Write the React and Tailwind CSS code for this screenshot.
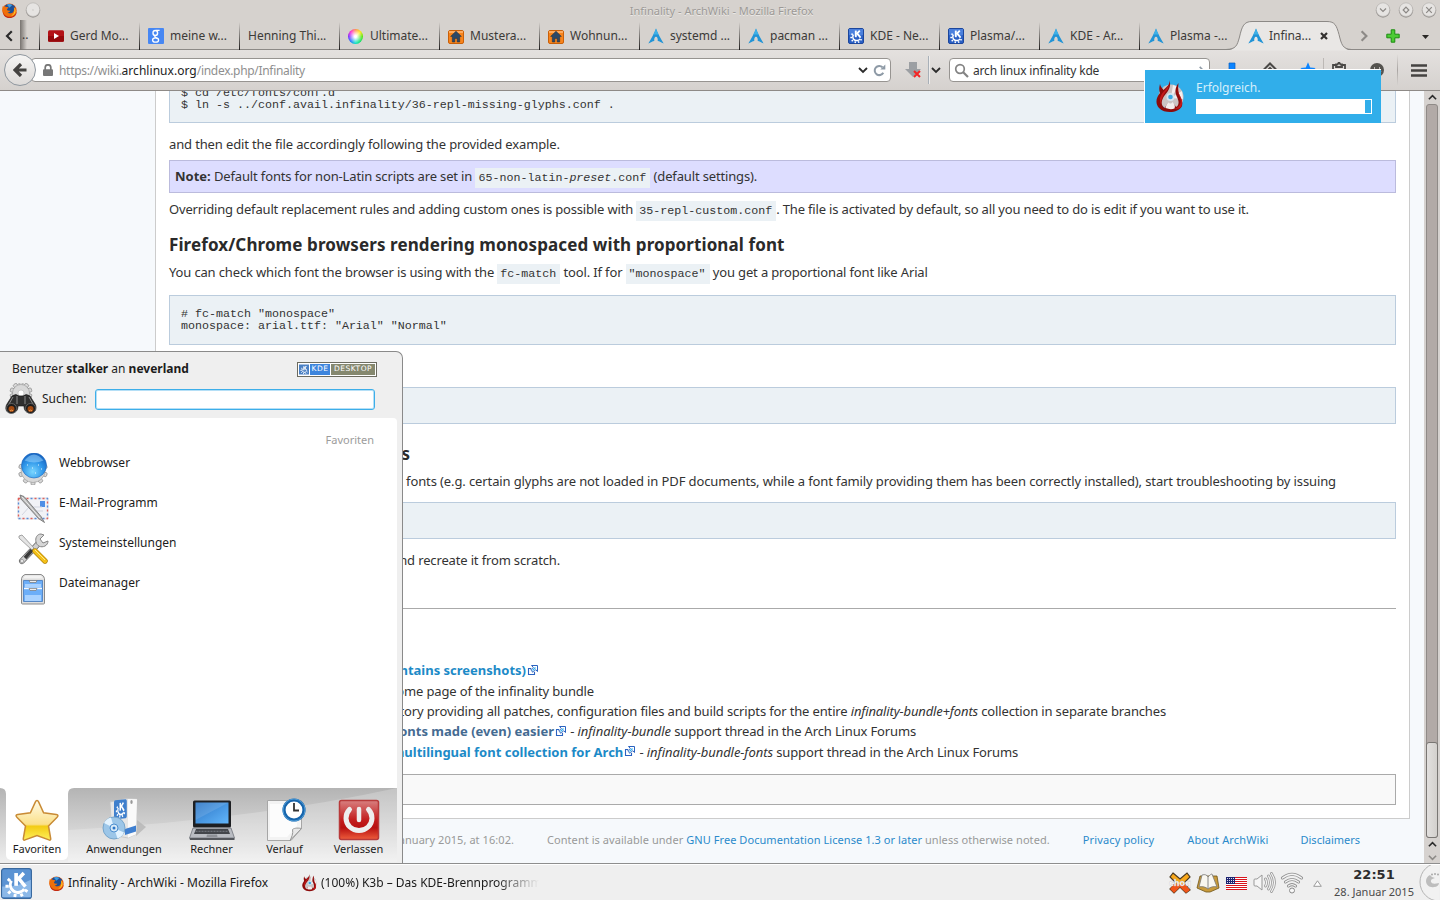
import React from 'react';
import clsx from 'clsx';

const TABS = [
    { title: 'Gerd Mo...', icon: 'youtube' },
    { title: 'meine w...', icon: 'google' },
    { title: 'Henning Thi...' },
    { title: 'Ultimate...', icon: 'wheel' },
    { title: 'Mustera...', icon: 'house' },
    { title: 'Wohnun...', icon: 'house' },
    { title: 'systemd ...', icon: 'arch' },
    { title: 'pacman ...', icon: 'arch' },
    { title: 'KDE - Ne...', icon: 'kde' },
    { title: 'Plasma/...', icon: 'kde' },
    { title: 'KDE - Ar...', icon: 'arch' },
    { title: 'Plasma -...', icon: 'arch' },
];

const FAVORITES = [
    { label: 'Webbrowser', Icon: GlobeIcon },
    { label: 'E-Mail-Programm', Icon: MailIcon },
    { label: 'Systemeinstellungen', Icon: ToolsIcon },
    { label: 'Dateimanager', Icon: CabinetIcon },
];

const GEAR = Array.from({ length: 10 }, (_, i) => i * 36);

function Gear({ cx, cy, r, fill = '#d8d8d8', stroke = '#8a8a8a' }) {
    return (
        <g>
            {GEAR.map(a => (
                <rect key={a} x={cx - 2} y={cy - r - 2.5} width="4" height="5" rx="1" fill={fill} stroke={stroke} strokeWidth=".7" transform={`rotate(${a} ${cx} ${cy})`} />
            ))}
            <circle cx={cx} cy={cy} r={r} fill={fill} stroke={stroke} strokeWidth=".5" />
        </g>
    );
}

/* K letter in front of a half gear, shared by the tab icon, the start button and the box */
function KMark() {
    return (
        <g stroke="#fff" fill="none">
            <path d="M7.8 2.6v6.6" strokeWidth="1.9" />
            <path d="M8.4 6.2l3.400-3.600M9.300 5.600l3.300 4" strokeWidth="1.800" />
            <path d="M5.400 6.600a3.800 3.800 0 1 0 6.600 4.200" strokeWidth="1.500" />
            <path d="M4.700 6.700L3.500 5.600M4 9.400H2.300M4.900 12l-1.200 1.200M7.400 13.400l-.3 1.600M10.300 13.200l.7 1.500M12.300 11.300l1.400.8" strokeWidth="1.500" />
        </g>
    );
}

function TabIcon({ name }) {
    if (name === 'youtube') {
        return (
            <svg width="16" height="16" viewBox="0 0 16 16">
                <rect y="2.3" width="16" height="11.4" rx="1.5" fill="#b31217" />
                <path d="M0 8h16v4.200q0 1.500-1.500 1.500h-13Q0 13.700 0 12.200z" fill="#96090c" />
                <path d="M6 5l5 3-5 3z" fill="#fff" />
            </svg>
        );
    }
    if (name === 'google') {
        return (
            <svg width="16" height="16" viewBox="0 0 16 16">
                <rect width="16" height="16" rx="1" fill="#4787f3" />
                <ellipse cx="7.300" cy="5" rx="2.300" ry="2.500" fill="none" stroke="#fff" strokeWidth="1.400" />
                <ellipse cx="7.600" cy="12" rx="3" ry="2.200" fill="none" stroke="#fff" strokeWidth="1.300" />
                <path d="M8 2.300h3.600M7.500 7.500c-1.300 1-.6 1.700.5 2.300l1.500.8" fill="none" stroke="#fff" strokeWidth="1.300" />
            </svg>
        );
    }
    if (name === 'wheel') {
        return <span className="block size-[15px] rounded-full bg-[radial-gradient(circle,white_10%,transparent_70%),conic-gradient(#ff8a4a,#ffe600,#4de600,#00e060,#00e0c0,#1070ff,#7a20ff,#ff20d0,#ff8a4a)]" />;
    }
    if (name === 'house') {
        return (
            <svg width="16" height="16" viewBox="0 0 16 16">
                <rect x=".5" y="2.5" width="15" height="13" rx="1.5" fill="#f8841b" stroke="#c95f08" />
                <path d="M1 3h14v2H1z" fill="#ffab5e" />
                <path d="M8 3.2L2.6 8.4h1.7V14h2.5v-3.6h2.4V14h2.5V8.4h1.7z" fill="#2c4866" stroke="#1b2f45" strokeWidth=".5" />
            </svg>
        );
    }
    if (name === 'kde') {
        return (
            <svg width="16" height="16" viewBox="0 0 16 16">
                <rect x=".5" y=".5" width="15" height="15" rx="1.5" fill="#2a5fc4" stroke="#1c469c" />
                <path d="M1 1h14v6Q8 9 1 7z" fill="#4b80dd" />
                <KMark />
            </svg>
        );
    }
    return (
        <svg width="16" height="16" viewBox="0 0 16 16">
            <path d="M8 .4C6.6 4.2 3.6 10 .3 15.6c2.400-1.500 4.200-2.400 6-2.700-.4-2.500.5-4.200 1.700-4.200s2.100 1.700 1.700 4.200c1.800.3 3.600 1.200 6 2.700C12.400 10 9.400 4.200 8 .4z" fill="#2294d6" />
            <path d="M8 .4C7.300 2.600 6.300 4.600 5.100 7c1.600-.6 4-.6 5.700 0C9.600 4.600 8.700 2.600 8 .4z" fill="#3fb0e6" />
        </svg>
    );
}

function FirefoxIcon() {
    return (
        <svg width="15" height="15" viewBox="0 0 16 16">
            <circle cx="8" cy="8" r="7.6" fill="#e8590c" />
            <path d="M3 3a7.600 7.600 0 0 1 11 1l-2 6-5 2-4-4z" fill="#1c4f96" />
            <path d="M5 1.500a7 7 0 0 1 6 .5L8 5z" fill="#3d9be0" />
            <path d="M.8 3.200C1.600 4.200 2.800 3.500 4.200 4c1 .2 1.600.5 2.800.5-.6 1.300-1.800 1.300-1.600 2.800C6 8.800 9 8 9 8c-.5 2-3 2.200-3 2.200s3 2.800 6.200-.7c1-1.500.7-3.500.3-5 2.200 1.500 3.200 4.500 2.700 6.500-1.600 4-5.200 4.800-8.200 4.300C1.500 14.500-.7 9 .8 3.200z" fill="#f0700a" />
            <path d="M13 4.500c1.800 2 2 5 .4 7-1.500 1.700-3 2.200-4.400 2.500 4-2 5-5 4-9.500z" fill="#ffcb2e" />
            <path d="M1 9c1 4 5 6.500 9 5.600 3-.6 5-3 5.500-5.600.5 4-3 7-7.500 7S1 13 1 9z" fill="#c32b12" />
        </svg>
    );
}

function K3bIcon({ size = 15 }) {
    return (
        <svg width={size} height={(size * 32) / 28} viewBox="0 0 28 32">
            <circle cx="15" cy="17" r="12.5" fill="#cbc3c3" />
            <path d="M15 18L26 11l1 8zM15 18L17 5l5 2z" fill="#f4eeee" />
            <path d="M13.500 0c.5 5-3 7-6 10-1-2-3-3-3.500-6-1 4-1 6 0 9-4 5-5 10-1 15 3 3 7 4 11 4 5 0 10-2 12-6 1-4-1-8-3-12-1-3-1-7-.5-11-3 4-4 8-2 13 2 4 3 7 1 10l-1.500 1c-1-2-2-3-3.500-4-1 2-3 2-4 0-2 2-3 3-3.500 5C5 26 5 22 7 18c3-5 9-9 6.500-18z" fill="#8d0b0b" />
            <path d="M12.500 5c-1 4-7 7-8.500 13 0 3 0 4 1 6 0-5 2-8 4.500-12 2-2 3.500-4 3-7zM21.500 9c0 5 4 8 3 14-1 3-3 5-6 6 7 1 9-5 7-10-1-3-3-5-4-10z" fill="#c41a1a" />
            <circle cx="14.500" cy="17" r="4" fill="#d4e5f0" />
            <circle cx="14.500" cy="17" r="2.300" fill="#38a8e0" />
            <path d="M9.500 28c.5-3 1.500-4 3-5.500 1 1.500 3 1.500 4-.5 2 2 3 4 2 6.500q-4 1.500-9-.5z" fill="#f2eded" />
        </svg>
    );
}

function GlobeIcon() {
    return (
        <svg width="32" height="32" viewBox="0 0 32 32">
            <Gear cx={16} cy={17.5} r={12} />
            <defs>
                <radialGradient id="globe" cx=".45" cy=".75" r=".75">
                    <stop offset="0" stopColor="#7ad6ff" />
                    <stop offset=".55" stopColor="#2f97ea" />
                    <stop offset="1" stopColor="#1560bd" />
                </radialGradient>
            </defs>
            <circle cx="17" cy="12.5" r="12.5" fill="url(#globe)" stroke="#1d66bd" strokeWidth=".6" />
            <path d="M7.500 7.500q9.500-12 19 0-9 4-19 0z" fill="#a4d9ff" opacity=".5" />
            <path d="M10 12h1M15 15h1M21 12h1M18 20h1M24 16h1" stroke="#e6f7ff" strokeWidth="1.2" />
        </svg>
    );
}

function MailIcon() {
    return (
        <svg width="32" height="32" viewBox="0 0 32 32">
            <path d="M1 5h30v21H1z" fill="#f1f2f6" stroke="#dcdde4" />
            <path d="M1.500 5.500h29v20h-29z" fill="none" stroke="#e0605a" strokeWidth="1.400" strokeDasharray="2 6" />
            <path d="M1.500 5.500h29v20h-29z" fill="none" stroke="#5a8bd6" strokeWidth="1.400" strokeDasharray="2 6" strokeDashoffset="4" />
            <rect x="23" y="8" width="5" height="6" fill="#4f8fe6" />
            <path d="M16 14h9M18 18h8M5 22l8-9" stroke="#d2d5df" />
            <path d="M3 2l4 1.500 17 20 3.500 6-6-4L4 6z" fill="#b4b4b4" stroke="#6d6d6d" strokeWidth=".8" />
            <path d="M5 4l18 21" stroke="#efefef" strokeWidth="1" />
        </svg>
    );
}

function ToolsIcon() {
    return (
        <svg width="32" height="32" viewBox="0 0 32 32">
            <path d="M5 28L21 11" stroke="#666" strokeWidth="6" strokeLinecap="round" />
            <path d="M5 28L21 11" stroke="#cfcfcf" strokeWidth="4.5" strokeLinecap="round" />
            <path d="M8 25l8-9" stroke="#3a3a3a" strokeWidth="3.5" />
            <path d="M24 1c-4 0-6 4-5 8s5 6 9 4c2-1 3-3 3-5l-5 2-3-4 4-4z" fill="#d6d6d6" stroke="#858585" />
            <circle cx="5" cy="28" r="1.5" fill="#fff" stroke="#777" strokeWidth=".6" />
            <path d="M2 3l3-1 12 13-2 2L2 5z" fill="#e4e4e4" stroke="#8f8f8f" strokeWidth=".8" />
            <path d="M18 18l10 10" stroke="#a87900" strokeWidth="5.400" strokeLinecap="round" />
            <path d="M18 18l10 10" stroke="#f4c018" strokeWidth="4.200" strokeLinecap="round" />
            <path d="M18 17l10 10" stroke="#ffe98a" strokeWidth="1" />
        </svg>
    );
}

function CabinetIcon() {
    return (
        <svg width="32" height="32" viewBox="0 0 32 32">
            <path d="M8 1.500h16q3 1 3.500 4V30q0 1-1 1h-21q-1 0-1-1V5.500q.5-3 3.500-4z" fill="#dedede" stroke="#8b8b8b" />
            <path d="M8 2.500h16l2 3H6z" fill="#f2f2f2" />
            <path d="M6.500 7.500h19v8h-19zM6.500 15.500h19v13h-19z" fill="#6caef8" stroke="#4279bd" strokeWidth=".8" />
            <path d="M8 11h16v3.500H8zM8 22h16v6H8z" fill="#a9d2ff" />
            <path d="M7 15.500h18" stroke="#f4f8ff" strokeWidth="1.400" />
            <path d="M12 7.500h8l-1 2h-6zM12 15.500h8l-1 2h-6z" fill="#eee" stroke="#777" strokeWidth=".7" />
        </svg>
    );
}

function BinocularsIcon() {
    return (
        <svg width="32" height="32" viewBox="0 0 32 32">
            <Gear cx={16} cy={10} r={8.5} />
            <circle cx="16" cy="10" r="3" fill="#fff" stroke="#aaa" strokeWidth=".5" />
            <path d="M7 13q4-3 7 0h4q3-3 7 0l5 8c3 5-1 10-5 9-4 0-6-3-6-7h-6c0 4-2 7-6 7C2 31-1 26 2 21z" fill="#2f2f2f" stroke="#111" strokeWidth=".6" />
            <path d="M8 14l-4 7M24 14l4 7M12 13v8M20 13v8" stroke="#8c8c8c" strokeWidth="1" />
            <circle cx="6.5" cy="25.5" r="5" fill="#1c1c1c" stroke="#777" strokeWidth=".7" />
            <circle cx="25.500" cy="25.500" r="5" fill="#1c1c1c" stroke="#777" strokeWidth=".7" />
            <circle cx="6.5" cy="26" r="3" fill="#a14a12" />
            <circle cx="25.5" cy="26" r="3" fill="#a14a12" />
            <path d="M5 28q2-2 3 0M24 28q2-2 3 0" stroke="#f09a4c" fill="none" />
        </svg>
    );
}

function StarIcon() {
    return (
        <svg width="46" height="44" viewBox="0 0 46 44">
            <defs>
                <linearGradient id="star" x2="0" y2="1">
                    <stop offset="0" stopColor="#fffbe8" />
                    <stop offset=".6" stopColor="#fbe08a" />
                    <stop offset=".65" stopColor="#f3cc14" />
                    <stop offset="1" stopColor="#fff05c" />
                </linearGradient>
            </defs>
            <path d="M23 2.500c1 0 1.300.7 1.700 1.600l4.900 10.600 12.700 1.700c2 .3 2 1.700.8 2.800l-8.600 8.700 2.200 12.600c.2 1.500-.5 2-1.800 1.400L23 37.600l-11.900 4.300c-1.300.6-2 .1-1.800-1.400l2.200-12.600-8.600-8.700c-1.200-1.100-1.200-2.500.8-2.800l12.700-1.700 4.900-10.600c.4-.9.7-1.600 1.700-1.600z" fill="url(#star)" stroke="#c98b35" strokeWidth="1.5" />
        </svg>
    );
}

function BoxIcon() {
    return (
        <svg width="46" height="44" viewBox="0 0 46 44">
            <path d="M35 38l10-9-9-7z" fill="#b5b5b5" opacity=".8" />
            <path d="M9 4L25 .5 36 1l-1 35-8 4-16-3z" fill="#e6e6e6" stroke="#c4c4c4" strokeWidth=".8" />
            <path d="M27 1l9 .3-1 35-8 3.500z" fill="#fafafa" />
            <path d="M24 31l11-3.500v6L24 37z" fill="#3f7fd0" />
            <ellipse cx="30.500" cy="4" rx="1.200" ry="2" fill="#999" />
            <g transform="translate(13 2.5) skewY(-6) scale(.8 1.180)">
                <rect width="16" height="16" rx="1.5" fill="#3f7fcc" />
                <KMark />
            </g>
            <circle cx="13" cy="30" r="11" fill="#9cc6e8" stroke="#76a5cb" />
            <path d="M13 30L3 25a11 11 0 0 1 7-5.500zM13 30l10 4.500a11 11 0 0 1-6.500 6z" fill="#e3f3ff" />
            <circle cx="13" cy="30" r="4" fill="#d7e9f7" stroke="#4d8fd0" />
            <circle cx="13" cy="30" r="1.500" fill="#2d78c8" />
        </svg>
    );
}

function LaptopIcon() {
    return (
        <svg width="46" height="44" viewBox="0 0 46 44">
            <defs>
                <linearGradient id="lcd" x2="1" y2="1">
                    <stop offset="0" stopColor="#2b74c4" />
                    <stop offset="1" stopColor="#62b6fb" />
                </linearGradient>
            </defs>
            <rect x="4" y="2.5" width="38" height="27" rx="1.5" fill="#1d1f22" />
            <rect x="6.5" y="4.5" width="33" height="21" fill="url(#lcd)" />
            <path d="M6.500 4.500h33L6.500 22z" fill="#fff" opacity=".12" />
            <path d="M4 30h38l3.500 10H.5z" fill="#b9bcc2" stroke="#70747b" strokeWidth=".8" />
            <path d="M7 31h32l2 5H5z" fill="#43464b" />
            <path d="M6.500 33.300h33" stroke="#777b82" strokeDasharray="2 1" />
            <path d="M18 36.500h10l.5 2.500h-11z" fill="#8e9197" />
            <path d="M.5 40h45v2H1z" fill="#54575c" />
        </svg>
    );
}

function HistoryIcon() {
    return (
        <svg width="46" height="44" viewBox="0 0 46 44">
            <path d="M5.500 2.500h34v28L29 42.500H5.500z" fill="#f3f3f3" stroke="#a6a6a6" />
            <path d="M8 6h27v22L25 39H8z" fill="#fcfcfc" />
            <path d="M39.500 30.500c-5-1-8 0-9 1 1 4-1 8-2.500 11z" fill="#e8e8e8" stroke="#999" />
            <circle cx="32" cy="12" r="10" fill="#fff" stroke="#1765ac" strokeWidth="3.200" />
            <circle cx="32" cy="12" r="11" fill="none" stroke="#5ba7e0" strokeWidth=".8" />
            <path d="M32 5v7.500h5" stroke="#333" strokeWidth="1.800" fill="none" />
        </svg>
    );
}

function PowerIcon() {
    return (
        <svg width="46" height="44" viewBox="0 0 46 44">
            <defs>
                <linearGradient id="pow" x2="0" y2="1">
                    <stop offset="0" stopColor="#d88080" />
                    <stop offset=".5" stopColor="#c31d1d" />
                    <stop offset=".7" stopColor="#b81010" />
                    <stop offset="1" stopColor="#ee5d3c" />
                </linearGradient>
            </defs>
            <rect x="3.500" y="2.500" width="39" height="39" rx="2" fill="url(#pow)" stroke="#b83a3a" strokeWidth="1.500" />
            <path d="M13.500 11.500a13 12.500 0 1 0 19 0" fill="none" stroke="#eee" strokeWidth="5" strokeLinecap="round" />
            <path d="M23 11v11" stroke="#eee" strokeWidth="4.500" strokeLinecap="round" />
        </svg>
    );
}

const LAUNCHER_TABS = [
    { label: 'Anwendungen', Icon: BoxIcon, cls: 'w-[112px]' },
    { label: 'Rechner', Icon: LaptopIcon, cls: 'w-[63px]' },
    { label: 'Verlauf', Icon: HistoryIcon, cls: 'w-[83px]' },
    { label: 'Verlassen', Icon: PowerIcon, cls: 'w-[65px]' },
];

function Chevron({ dir, className = 'text-[#2b2b2b]', size = 9 }) {
    const d = {
        left: 'M6.500 1L2.500 5l4 4',
        right: 'M3 1l4 4-4 4',
        up: 'M1 7l4-4 4 4',
        down: 'M1 3l4 4 4-4',
    }[dir];
    return (
        <svg width={size} height={size} viewBox="0 0 10 10" className={clsx('shrink-0', className)}>
            <path d={d} fill="none" stroke="currentColor" strokeWidth="1.8" />
        </svg>
    );
}

function WindowButton({ children }) {
    return (
        <svg width="16" height="16" viewBox="0 0 16 16">
            <circle cx="8" cy="8.5" r="7.2" fill="#9b9895" />
            <circle cx="8" cy="7.6" r="6.8" fill="#e6e4e2" stroke="#b0aca9" strokeWidth=".6" />
            <g fill="none" stroke="#8b8885" strokeWidth="1.2">{children}</g>
        </svg>
    );
}

function TitleBar() {
    return (
        <div className="flex h-5 items-center pl-[2px] pr-[3px]">
            <FirefoxIcon />
            <div className="ml-[8px]">
                <WindowButton><circle cx="8" cy="8" r=".2" strokeWidth=".5" /></WindowButton>
            </div>
            <div className="flex-1 pl-[1px] pt-[2px] text-center text-[11px] leading-4 text-[#9c9996] [text-shadow:0_1px_0_#eceae8]">
                <span className="ml-[26px]">Infinality - ArchWiki - Mozilla Firefox</span>
            </div>
            <div className="flex gap-[7px]">
                <WindowButton><path d="M5 6.500l3 3 3-3" /></WindowButton>
                <WindowButton><path d="M8 5.200L10.800 8 8 10.800 5.200 8z" /></WindowButton>
                <WindowButton><path d="M5.200 5.200l5.600 5.600M10.800 5.200l-5.600 5.600" /></WindowButton>
            </div>
        </div>
    );
}

function TabStrip() {
    return (
        <div className="relative flex h-[30px] shrink-0 text-[12px] text-[#3c3a38] shadow-[inset_0_-1px_0_#8c8986]">
            <div className="flex w-[39px] items-center">
                <div className="flex w-5 justify-center pt-[2px]"><Chevron dir="left" size={12} /></div>
                <div className="h-full w-[7px] bg-linear-to-r from-[#77736f] to-transparent" />
                <span className="-ml-[5px]">..</span>
            </div>
            {TABS.map(t => (
                <div key={t.title} className="relative flex w-[100px] items-center pl-[9px] pt-[2px]">
                    <span className="absolute bottom-0 left-0 h-[28px] w-px bg-linear-to-b from-transparent to-[#1d1b1a]" />
                    {t.icon && <span className="mr-[6px] w-4 shrink-0"><TabIcon name={t.icon} /></span>}
                    <span className="whitespace-nowrap">{t.title}</span>
                </div>
            ))}
            <div className="relative flex w-[100px] items-center pl-[9px] pt-[2px]">
                <svg className="absolute -left-[13px] top-0" width="126" height="31" viewBox="0 0 126 31">
                    <path d="M0 30.500C10 29.500 11 26 13.500 17 16 6 18 1.500 26 1.500h75c8 0 9.500 4 12 13 2.500 10 3.500 15 12.500 16z" fill="#e9e7e5" />
                    <path d="M0 29.500C10 29 11 26 13.500 17 16 6 18 1.500 26 1.500h75c8 0 9.500 4 12 13 2.500 10 3.500 14.500 12.500 15" fill="none" stroke="#8c8986" />
                </svg>
                <span className="relative mr-[5px] shrink-0"><TabIcon name="arch" /></span>
                <span className="relative tracking-[-0.05px]">Infina...</span>
                <svg className="relative ml-[9px]" width="8" height="8" viewBox="0 0 8 8">
                    <path d="M1 1l6 6M7 1L1 7" stroke="#33312f" strokeWidth="2.200" />
                </svg>
            </div>
            <div className="flex flex-1 items-center pt-[1px]">
                <span className="ml-[19px]"><Chevron dir="right" size={12} className="text-[#8d8a87]" /></span>
                <svg className="ml-[16px]" width="14" height="14" viewBox="0 0 14 14">
                    <path d="M5.200.8h3.600v4.400h4.400v3.600H8.800v4.400H5.200V8.800H.8V5.200h4.400z" fill="#4ccc34" stroke="#1c8c10" />
                </svg>
                <svg className="ml-[22px] mt-[2px]" width="7" height="4" viewBox="0 0 7 4"><path d="M0 0h7L3.500 4z" fill="#2a2826" /></svg>
            </div>
        </div>
    );
}

function NavBar() {
    return (
        <div className="flex h-[40px] shrink-0 items-center bg-linear-to-b from-[#e4e1df] to-[#d5d1ce] text-[12px]">
            <div className="z-10 ml-1 flex size-8 shrink-0 items-center justify-center rounded-full border border-[#8f979f] bg-linear-to-b from-[#f6f5f4] to-[#dddad8]">
                <svg width="14" height="14" viewBox="0 0 14 14"><path d="M8 1L2 7l6 6M2 7h11.500" fill="none" stroke="#454341" strokeWidth="3.200" /></svg>
            </div>
            <div className="-ml-[5px] flex h-6 w-[860px] items-center rounded-sm border border-[#979491] bg-white pl-[11px]">
                <svg width="10" height="12" viewBox="0 0 10 12">
                    <path d="M2.200 6V3.600a2.800 2.800 0 0 1 5.600 0V6" fill="none" stroke="#777" strokeWidth="1.700" />
                    <rect y="5.200" width="10" height="6.800" rx="1" fill="#777" />
                </svg>
                <span className="ml-[6px] flex-1 pt-px tracking-[-0.31px] text-[#8f8f8f]">https://wiki.<span className="tracking-[0.04px] text-[#222]">archlinux.org</span>/index.php/Infinality</span>
                <Chevron dir="down" size={10} />
                <svg className="ml-[5px] mr-[4px]" width="13" height="13" viewBox="0 0 13 13">
                    <path d="M10.300 8.800A4.600 4.600 0 1 1 9.500 3.200" fill="none" stroke="#8e9aa6" strokeWidth="2" />
                    <path d="M12.300.6v5H7.300z" fill="#8e9aa6" />
                </svg>
            </div>
            <svg className="ml-[14px]" width="17" height="18" viewBox="0 0 17 18">
                <path d="M4 1h8v7h4l-8 8L0 8h4z" fill="#9c9fa3" />
                <path d="M9 10l6 6M15 10l-6 6" stroke="#f32525" strokeWidth="2" />
            </svg>
            <span className="ml-[6px] h-7 w-[2px] border-l border-[#a8b0b8] bg-[#efedec]" />
            <span className="ml-px"><Chevron dir="down" size={10} /></span>
            <div className="ml-[8px] flex h-6 w-[261px] items-center rounded-sm border border-[#979491] bg-white pl-[4px] pr-[3px]">
                <svg width="15" height="15" viewBox="0 0 15 15">
                    <circle cx="6" cy="6" r="4.300" fill="none" stroke="#838383" strokeWidth="1.700" />
                    <path d="M9 9l5 5" stroke="#838383" strokeWidth="2.200" />
                </svg>
                <span className="ml-[4px] flex-1 pt-px tracking-[-0.17px] text-[#333]">arch linux infinality kde</span>
                <Chevron dir="right" className="text-[#8e9aa6]" />
            </div>
            <div className="flex flex-1 items-center">
                <svg className="ml-[14px]" width="16" height="16" viewBox="0 0 16 16"><path d="M5 1h6v7h4l-7 7-7-7h4z" fill="#0c84ff" stroke="#0a5fc0" strokeWidth=".7" /></svg>
                <svg className="ml-[22px]" width="16" height="16" viewBox="0 0 16 16"><path d="M1 8.500l7-7 7 7" fill="none" stroke="#4a4846" strokeWidth="2" /><path d="M3.500 9v6h3v-4h3v4h3V9L8 4.500z" fill="#4a4846" /></svg>
                <svg className="ml-[22px]" width="16" height="16" viewBox="0 0 16 16"><path d="M8 .3l2.200 5.200 5.400.5-4 3.600 1.100 5.400L8 12.200 3.300 15l1.100-5.400L.4 6l5.400-.5z" fill="#0c84ff" /></svg>
                <span className="ml-[7px] h-6 w-px bg-[#bcb8b5]" />
                <svg className="ml-[7px]" width="16" height="16" viewBox="0 0 16 16"><path d="M5 3H2v12h12V3h-3M5 5V2.500h1.500l1-1.500h1l1 1.500H11V5z" fill="none" stroke="#4a4846" strokeWidth="1.800" /></svg>
                <svg className="ml-[22px]" width="16" height="16" viewBox="0 0 16 16"><circle cx="8" cy="8" r="7" fill="#55534f" /><path d="M5 6h1M10 6h1M4 9q4 4 8 0" stroke="#d8d5d2" strokeWidth="1.400" fill="none" /></svg>
                <span className="ml-[12px] h-8 w-px bg-linear-to-b from-transparent via-[#a9a5a2] to-transparent" />
                <svg className="ml-[13px]" width="16" height="13" viewBox="0 0 16 13"><path d="M0 1.500h16M0 6.500h16M0 11.500h16" stroke="#454341" strokeWidth="2.600" /></svg>
            </div>
        </div>
    );
}

function Code({ children }) {
    return <code className="bg-[#ebf1f5] py-[3px] pl-[3px] pr-[4px] font-['Liberation_Mono',monospace] text-[11.66px] tracking-normal text-[#333]">{children}</code>;
}

function Pre({ className, children }) {
    return (
        <pre className={clsx("shrink-0 overflow-hidden border border-[#bbccdd] bg-[#ebf1f5] pl-[11px] font-['Liberation_Mono',monospace] text-[11.66px] leading-[12px] tracking-normal text-[#333]", className)}>
            {children}
        </pre>
    );
}

// line whose left part runs behind the launcher; anchored on its right end
function Tail({ className, children }) {
    return <div className={clsx('flex h-5 shrink-0 items-center justify-end whitespace-pre', className)}>{children}</div>;
}

function ExternalIcon() {
    return (
        <svg className="ml-[1px] mr-[1px]" width="11" height="11" viewBox="0 0 11 11">
            <path d="M4 3.500H1.500v6h6V7" fill="none" stroke="#2a62c0" strokeWidth="1.100" />
            <path d="M4.500.5h6v6L8.600 4.700 6 7.300 3.700 5l2.600-2.600z" fill="#fff" stroke="#2a62c0" />
            <path d="M5.500 5.500l3-3" stroke="#36b3f0" strokeWidth="1.300" />
        </svg>
    );
}

function WikiPage() {
    return (
        <div className="flex min-w-0 flex-1 flex-col bg-[#f6f9fc]">
            <div className="ml-[155px] mr-[14px] flex h-[728px] shrink-0 flex-col border-x border-b border-[#cccccc] bg-white px-[13px] text-[13px] leading-5 tracking-[-0.15px] text-[#333]">
                <Pre className="h-[32px] border-t-0">
                    <span className="-mt-[4px] block">{'$ cd /etc/fonts/conf.d\n$ ln -s ../conf.avail.infinality/36-repl-missing-glyphs.conf .'}</span>
                </Pre>
                <p className="mt-[11px] h-5 tracking-[-0.135px]">and then edit the file accordingly following the provided example.</p>
                <div className="mt-[6px] flex h-[33px] shrink-0 items-center border border-[#bbbbdd] bg-[#ddddff] pl-[5px]">
                    <p><b className="tracking-normal">Note:</b> Default fonts for non-Latin scripts are set in <Code>65-non-latin-<i>preset</i>.conf</Code> (default settings).</p>
                </div>
                <p className="mt-[6px] h-5 whitespace-nowrap tracking-[-0.165px]">Overriding default replacement rules and adding custom ones is possible with <Code>35-repl-custom.conf</Code>. The file is activated by default, so all you need to do is edit if you want to use it.</p>
                <h3 className="mt-[14px] h-6 text-[17px] font-bold leading-6 tracking-[0.1px] text-[#2a2a2a]">Firefox/Chrome browsers rendering monospaced with proportional font</h3>
                <p className="mt-[5px] h-5">You can check which font the browser is using with the <Code>fc-match</Code> tool. If for <Code>"monospace"</Code> you get a proportional font like Arial</p>
                <Pre className="mt-[13px] h-[50px] pt-[12px]">{'# fc-match "monospace"\nmonospace: arial.ttf: "Arial" "Normal"'}</Pre>
                <Pre className="mt-[42px] h-[37px]" />
                <Tail className="mt-[20px] w-[241px] text-[17px] font-bold text-[#2a2a2a]">s</Tail>
                <Tail className="mt-[7px] w-[1167px] tracking-[-0.115px]">n fonts (e.g. certain glyphs are not loaded in PDF documents, while a font family providing them has been correctly installed), start troubleshooting by issuing</Tail>
                <Pre className="mt-[11px] h-[37px]" />
                <Tail className="mt-[11px] w-[391px]">and recreate it from scratch.</Tail>
                <hr className="mt-[38px] border-[#aaaaaa]" />
                <div className="mt-[51px] flex flex-col">
                    <Tail className="h-[20.5px] w-[370px] font-bold tracking-normal text-[#1c8ac7]">ntains screenshots)<ExternalIcon /></Tail>
                    <Tail className="h-[20.5px] w-[425px]">home page of the infinality bundle</Tail>
                    <Tail className="h-[20px] w-[997px]">repository providing all patches, configuration files and build scripts for the entire <i>infinality-bundle+fonts</i> collection in separate branches</Tail>
                    <Tail className="h-[20px] w-[747px]"><b className="tracking-normal text-[#456b92]">fonts made (even) easier</b><ExternalIcon /> - <i className="tracking-[-0.05px]">infinality-bundle</i> support thread in the Arch Linux Forums</Tail>
                    <Tail className="h-[21px] w-[849px]"><b className="tracking-normal text-[#1c8ac7]">multilingual font collection for Arch</b><ExternalIcon /> - <i className="tracking-[-0.05px]">infinality-bundle-fonts</i> support thread in the Arch Linux Forums</Tail>
                </div>
                <div className="mt-[12px] h-[31px] shrink-0 border border-[#aaaaaa] bg-[#f9f9f9]" />
            </div>
            <div className="flex h-[43px] items-center whitespace-nowrap text-[11px] tracking-[0.06px] text-[#999]">
                <span className="flex w-[514px] justify-end">28 January 2015, at 16:02.</span>
                <span className="ml-[33px]">Content is available under <span className="text-[#2a8acb]">GNU Free Documentation License 1.3 or later</span> unless otherwise noted.</span>
                <span className="ml-[33px] tracking-[0.14px] text-[#2a8acb]">Privacy policy</span>
                <span className="ml-[33px] tracking-[0.14px] text-[#2a8acb]">About ArchWiki</span>
                <span className="ml-[32px] tracking-normal text-[#2a8acb]">Disclaimers</span>
            </div>
        </div>
    );
}

function Scrollbar() {
    return (
        <div className="flex w-4 flex-col items-center bg-[#d6d2cf]">
            <div className="flex h-[13px] items-center"><Chevron dir="up" /></div>
            <div className="flex w-3 flex-1 flex-col justify-end rounded-[3px] border border-[#8f8a87] bg-[#b2aaa7]">
                <div className="-mx-px -mb-px h-[96px] rounded-[3px] border border-[#797673] bg-linear-to-r from-[#e2e0de] to-[#d3d0cd]" />
            </div>
            <div className="flex h-[13px] items-center"><Chevron dir="up" /></div>
            <div className="flex h-[12px] items-center"><Chevron dir="down" className="text-[#8d8a87]" /></div>
        </div>
    );
}

function Launcher() {
    return (
        <div className="absolute left-0 top-[351px] flex h-[512px] w-[403px] flex-col rounded-tr-[7px] border-r border-t border-[#8a8a8a] bg-[#efefef] text-[12px] text-[#1c1c1c]">
            <div className="flex h-[32px] items-center justify-between pl-3 pr-[25px] pt-[2px]">
                <span>Benutzer <b>stalker</b> an <b>neverland</b></span>
                <div className="flex h-[15px] w-[80px] items-center gap-px border border-[#6b6b60] bg-white p-px font-['DejaVu_Sans',sans-serif] text-[7.5px] leading-none text-white">
                    <svg width="10" height="11" viewBox="0 0 16 16"><rect width="16" height="16" fill="#4a80c4" /><KMark /></svg>
                    <span className="flex h-full w-5 items-center justify-center bg-[#3d85dd] tracking-[0.6px]">KDE</span>
                    <span className="flex h-full flex-1 items-center justify-center bg-[#85886f] tracking-[0.5px]">DESKTOP</span>
                </div>
            </div>
            <div className="flex h-[34px] shrink-0 items-center pb-[4px] pl-[5px]">
                <BinocularsIcon />
                <span className="ml-[5px] w-[53px]">Suchen:</span>
                <div className="h-[21px] w-[280px] rounded-[3px] border border-[#3daee9] bg-white shadow-[inset_0_0_0_1px_#b5dff6]" />
            </div>
            <div className="mr-[5px] flex h-[370px] shrink-0 flex-col rounded-tr-sm bg-white">
                <div className="mt-[13px] pr-[23px] text-right text-[11px] leading-[18px] text-[#9c9c9c]">Favoriten</div>
                {FAVORITES.map(({ label, Icon }) => (
                    <div key={label} className="flex h-10 pl-[17px] pt-[4px]">
                        <Icon />
                        <span className="ml-[10px] h-5 leading-5">{label}</span>
                    </div>
                ))}
            </div>
            <div className="relative mr-[5px] flex flex-1 bg-linear-to-b from-[#b4b4b4] to-[#efefef] text-[11px]">
                <svg className="absolute left-0 top-0" width="397" height="74" viewBox="0 0 397 74">
                    <path d="M68 42Q250 32 397 0v74H68z" fill="#fff" opacity=".22" />
                    <path d="M0 0q6 0 6 6V0zM68 0h6q-6 0-6 6z" fill="#fff" />
                </svg>
                <div className="relative ml-[6px] flex h-[72px] w-[62px] flex-col items-center rounded-b-[5px] bg-white pt-[10px]">
                    <StarIcon />
                    <span className="leading-[14px]">Favoriten</span>
                </div>
                {LAUNCHER_TABS.map(({ label, Icon, cls }) => (
                    <div key={label} className={clsx('relative flex flex-col items-center pt-[10px]', cls)}>
                        <Icon />
                        <span className="leading-[14px]">{label}</span>
                    </div>
                ))}
            </div>
        </div>
    );
}

function Notification() {
    return (
        <div className="absolute left-[1144px] top-[69px] flex h-[54px] w-[237px] border-l border-t border-white bg-[#31aeea] pl-[11px] pt-[10px]">
            <K3bIcon size={28} />
            <div className="ml-[12px] w-[176px]">
                <div className="-mt-px text-[12px] leading-[18px] text-[#d6effb]">Erfolgreich.</div>
                <div className="mt-[2px] flex h-[15px] justify-end border border-white bg-white">
                    <div className="h-full w-[6px] bg-[#31aeea]" />
                </div>
            </div>
        </div>
    );
}

function Taskbar() {
    return (
        <div className="flex h-[37px] shrink-0 items-center overflow-hidden border-t border-[#8e8e8e] bg-[#efefef] pt-[2px] text-[12px] text-[#1a1a1a] shadow-[inset_0_1px_0_#fff]">
            <svg className="ml-[1px]" width="31" height="31" viewBox="0 0 16 16">
                <rect x=".3" y=".3" width="15.4" height="15.4" rx="1.3" fill="#5b93d3" stroke="#39699f" strokeWidth=".6" />
                <path d="M.6 9.500Q8 10 15.400 6V15H.6z" fill="#8bb8e8" />
                <KMark />
            </svg>
            <span className="ml-[17px]"><FirefoxIcon /></span>
            <span className="ml-[4px] w-[234px]">Infinality - ArchWiki - Mozilla Firefox</span>
            <K3bIcon size={15} />
            <span className="ml-[4px] w-[218px] overflow-hidden whitespace-nowrap bg-linear-to-r from-[#1a1a1a] from-80% to-transparent bg-clip-text text-transparent">(100%) K3b – Das KDE-Brennprogramm</span>
            <div className="flex flex-1 items-center pl-[629px]">
                <svg width="24" height="24" viewBox="0 0 24 24">
                    <path d="M5 2l7 6 7-6 3 4-6 6 6 7-4 3-6-6-6 6-4-4 6-6-6-6z" fill="#f9a81a" stroke="#4a3a22" strokeWidth="1.2" />
                    <path d="M12 13l5 0 5 6-4 3-6-6-6 6-4-4 4-5z" fill="#f0551a" />
                    <text x="1" y="15" fontSize="8" fontWeight="bold" fill="#fff" stroke="#bbb" strokeWidth=".3" textLength="22" lengthAdjust="spacingAndGlyphs" fontFamily="DejaVu Sans">choq</text>
                </svg>
                <svg className="ml-[4px]" width="24" height="20" viewBox="0 0 24 20">
                    <path d="M1 15L4 3h17l2 12-9 4h-4z" fill="#c99b3b" stroke="#6d5318" strokeWidth=".8" />
                    <path d="M3 14L6 2c3-1 5 0 6 2 2-2 3-3 4-3l5 13c-3-1-7 0-9 2-2-2-6-3-9-2z" fill="#f9f7f0" stroke="#777" strokeWidth=".8" />
                    <path d="M12 4v12" stroke="#888" />
                </svg>
                <svg className="ml-[6px] shrink-0" width="21" height="13" viewBox="0 0 21 13">
                    <rect width="21" height="13" fill="#fff" />
                    <path d="M0 .5h21M0 2.500h21M0 4.500h21M0 6.500h21M0 8.500h21M0 10.500h21M0 12.500h21" stroke="#d8141c" />
                    <rect width="9" height="7" fill="#1d2470" />
                    <path d="M1 1.500h7M1 3.500h7M1 5.500h7" stroke="#dde" strokeDasharray="1 1" />
                </svg>
                <svg className="ml-[6px] shrink-0" width="24" height="24" viewBox="0 0 24 24">
                    <path d="M1 9q0-1 1-1h2l5-4v15l-5-4H2q-1 0-1-1z" fill="#f6f6f6" stroke="#999" />
                    <g fill="none" stroke="#969696" strokeWidth="2.800" strokeLinecap="round"><path d="M12.500 8q2 3.500 0 7M15.500 5q4 6.500 0 13M18.500 2.500q6 9 0 18" /></g>
                    <g fill="none" stroke="#f4f4f4" strokeWidth="1.300" strokeLinecap="round"><path d="M12.500 8q2 3.500 0 7M15.500 5q4 6.500 0 13M18.500 2.500q6 9 0 18" /></g>
                </svg>
                <svg className="ml-[3px] shrink-0" width="24" height="22" viewBox="0 0 24 22">
                    <g fill="none" stroke="#8e8e8e" strokeWidth="3" strokeLinecap="round"><path d="M2.500 6q9.500-7.500 19 0M5.500 10q6.500-5 13 0M8.500 14q3.500-2.700 7 0" /></g>
                    <g fill="none" stroke="#f4f4f4" strokeWidth="1.400" strokeLinecap="round"><path d="M2.500 6q9.500-7.500 19 0M5.500 10q6.500-5 13 0M8.500 14q3.500-2.700 7 0" /></g>
                    <circle cx="12" cy="18.500" r="2.500" fill="#f8f8f8" stroke="#8a8a8a" />
                </svg>
                <svg className="ml-[9px] shrink-0" width="9" height="7" viewBox="0 0 9 7"><path d="M4.500.8L8.300 6.300H.7z" fill="#fff" stroke="#9a9a9a" /></svg>
                <div className="ml-[10px] w-[84px] shrink-0 text-center">
                    <div className="font-['DejaVu_Sans',sans-serif] text-[13px] font-bold leading-[16px] text-[#2c2c2c]">22:51</div>
                    <div className="mt-px whitespace-nowrap text-[11px] leading-[16px] text-[#4a4a4a]">28. Januar 2015</div>
                </div>
                <svg className="ml-[3px] shrink-0" width="20" height="36" viewBox="0 0 20 36">
                    <circle cx="20" cy="17" r="19" fill="#f1f1f1" stroke="#b4b4b4" />
                    <path d="M11 10a7 7 0 0 0-4 6c0 4 4 7 8 6 3 0 5-2 5-4q-7 2-8-1t4-4q-3 0-5-3z" fill="#bdbdbd" />
                    <circle cx="13" cy="9.500" r="1" fill="#aaa" />
                    <circle cx="16" cy="9" r="1" fill="#aaa" />
                    <circle cx="19" cy="9.500" r="1" fill="#aaa" />
                </svg>
            </div>
        </div>
    );
}

export default function App() {
    return (
        <div className="relative flex h-[900px] w-[1440px] flex-col overflow-hidden bg-[#d6d2ce] font-['Noto_Sans',sans-serif]">
            <TitleBar />
            <TabStrip />
            <NavBar />
            <div className="flex min-h-0 flex-1 border-t border-[#8e8a87]">
                <WikiPage />
                <Scrollbar />
            </div>
            <Taskbar />
            <Launcher />
            <Notification />
        </div>
    );
}
